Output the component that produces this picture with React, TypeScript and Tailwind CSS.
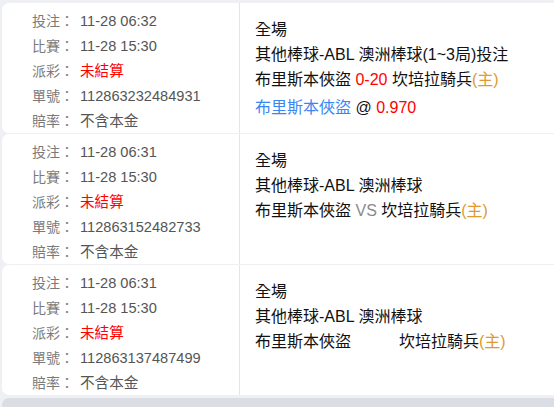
import React from 'react'

type Bet = {
  placed: string
  match: string
  no: string
  title: string
  league: string
  home: string
  away: string
  mid: 'score' | 'vs' | 'blank'
  score?: string
  pick?: string
  odds?: string
}

const bets: Bet[] = [
  {
    placed: '11-28 06:32',
    match: '11-28 15:30',
    no: '112863232484931',
    title: '全場',
    league: '其他棒球-ABL 澳洲棒球(1~3局)投注',
    away: '布里斯本俠盜',
    home: '坎培拉騎兵',
    mid: 'score',
    score: '0-20',
    pick: '布里斯本俠盜',
    odds: '0.970',
  },
  {
    placed: '11-28 06:31',
    match: '11-28 15:30',
    no: '112863152482733',
    title: '全場',
    league: '其他棒球-ABL 澳洲棒球',
    away: '布里斯本俠盜',
    home: '坎培拉騎兵',
    mid: 'vs',
  },
  {
    placed: '11-28 06:31',
    match: '11-28 15:30',
    no: '112863137487499',
    title: '全場',
    league: '其他棒球-ABL 澳洲棒球',
    away: '布里斯本俠盜',
    home: '坎培拉騎兵',
    mid: 'blank',
  },
]

function Field({ label, children }: { label: string; children: React.ReactNode }) {
  return (
    <div className="flex h-[25px] items-center">
      <span className="w-[48px] shrink-0 text-[14px] text-[#7a7a7a]">{label}：</span>
      <span className="text-[14.6px]">{children}</span>
    </div>
  )
}

function BetRow({ b }: { b: Bet }) {
  return (
    <div className="flex h-[130px] rounded-l-[7px] bg-white">
      <div className="w-[238px] shrink-0 border-r border-[#e4e4ea] pl-[30px] pt-[6px] text-[#555]">
        <Field label="投注">{b.placed}</Field>
        <Field label="比賽">{b.match}</Field>
        <Field label="派彩">
          <span className="text-[#ff0000]">未結算</span>
        </Field>
        <Field label="單號">{b.no}</Field>
        <Field label="賠率">不含本金</Field>
      </div>
      <div className="flex-1 pl-[15px] pt-[14px] text-[16px] leading-[25px] text-[#111]">
        <div>{b.title}</div>
        <div>{b.league}</div>
        <div className="whitespace-pre">
          {b.away}
          {b.mid === 'score' && <span className="text-[#ff0000]"> {b.score} </span>}
          {b.mid === 'vs' && <span className="text-[#8a8a8a]"> VS </span>}
          {b.mid === 'blank' && <span className="inline-block w-[48px]"> </span>}
          {b.home}
          <span className="text-[#e0982f]">(主)</span>
        </div>
        {b.pick && (
          <div className="mt-[3px]">
            <span className="text-[#3a86f5]">{b.pick}</span> @ <span className="text-[#ff0000]">{b.odds}</span>
          </div>
        )}
      </div>
    </div>
  )
}

export default function App() {
  return (
    <div
      className="h-[407px] w-[554px] overflow-hidden bg-[#eef0f4] pl-[2px] pt-[3px]"
      style={{ fontFamily: '"Liberation Sans", "Noto Sans CJK TC", sans-serif' }}
    >
      <div className="flex flex-col gap-[1px]">
        {bets.map((b) => (
          <BetRow key={b.no} b={b} />
        ))}
      </div>
      <div className="mt-[3px] h-[20px] rounded-tl-[7px] bg-[#dadde3]" />
    </div>
  )
}
